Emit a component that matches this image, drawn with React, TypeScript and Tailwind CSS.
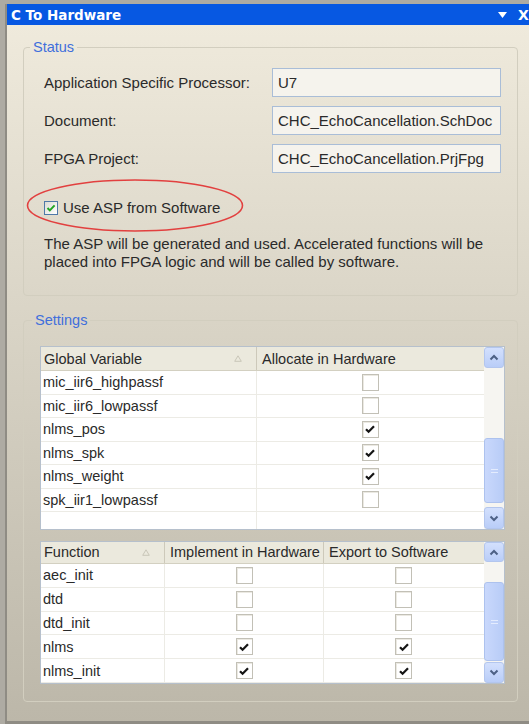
import React from "react";

type VarRow = { name: string; hw: boolean };
type FnRow = { name: string; hw: boolean; sw: boolean };

const variables: VarRow[] = [
  { name: "mic_iir6_highpassf", hw: false },
  { name: "mic_iir6_lowpassf", hw: false },
  { name: "nlms_pos", hw: true },
  { name: "nlms_spk", hw: true },
  { name: "nlms_weight", hw: true },
  { name: "spk_iir1_lowpassf", hw: false },
];

const functions: FnRow[] = [
  { name: "aec_init", hw: false, sw: false },
  { name: "dtd", hw: false, sw: false },
  { name: "dtd_init", hw: false, sw: false },
  { name: "nlms", hw: true, sw: true },
  { name: "nlms_init", hw: true, sw: true },
];

function GridCheck({ checked }: { checked: boolean }) {
  return (
    <span className="flex h-[17px] w-[17px] items-center justify-center border border-[#c2c0b6] bg-white shadow-[inset_1px_1px_0_#ebe9e2]">
      {checked && (
        <svg width="12" height="12" viewBox="0 0 12 12">
          <path d="M2 6.2l2.6 2.6L10 3.2" fill="none" stroke="#151515" strokeWidth="2.2" />
        </svg>
      )}
    </span>
  );
}

function SortArrow() {
  return (
    <svg width="8" height="7" viewBox="0 0 8 7" className="shrink-0">
      <path d="M4 0.8L7.3 6.3H0.7Z" fill="none" stroke="#c9c6b8" strokeWidth="1" />
    </svg>
  );
}

function Chevron({ up }: { up: boolean }) {
  return (
    <svg width="10" height="7" viewBox="0 0 10 7">
      <path
        d={up ? "M1.5 5.5L5 2l3.5 3.5" : "M1.5 1.5L5 5l3.5-3.5"}
        fill="none"
        stroke="#4d6185"
        strokeWidth="2"
      />
    </svg>
  );
}

const btn =
  "flex items-center justify-center rounded-[3px] border border-[#b3c6ee] bg-linear-to-b from-[#d3e0fd] to-[#b9cdf8]";

function ScrollBar({
  upClass,
  downClass,
  gapClass,
  thumbClass,
}: {
  upClass: string;
  downClass: string;
  gapClass: string;
  thumbClass: string;
}) {
  return (
    <div className="flex w-[20px] flex-col bg-[#f6f5f1]">
      <div className={`${btn} ${upClass}`}>
        <Chevron up />
      </div>
      <div className="flex flex-1 flex-col">
        <div className={gapClass} />
        <div
          className={`flex flex-col items-center justify-center gap-[2px] rounded-[3px] border border-[#adc2ee] bg-linear-to-r from-[#c9d8fc] to-[#b8ccf7] ${thumbClass}`}
        >
          <span className="h-px w-[7px] bg-[#e4ecfe]" />
          <span className="h-px w-[7px] bg-[#e4ecfe]" />
        </div>
      </div>
      <div className={`${btn} ${downClass}`}>
        <Chevron up={false} />
      </div>
    </div>
  );
}

const headCell =
  "flex items-center border-r border-[#cdc9ba] px-[3px] whitespace-nowrap overflow-hidden";

function VariableGrid() {
  return (
    <div className="flex h-[184px] border border-[#b6c0cc] bg-white">
      <div className="flex flex-1 flex-col">
        <div className="grid h-[24px] grid-cols-[216px_226px] border-b border-[#d3d0c1] bg-[#ebe9dd]">
          <div className={`${headCell} justify-between pr-[14px]`}>
            <span>Global Variable</span>
            <SortArrow />
          </div>
          <div className="flex items-center px-[5px]">Allocate in Hardware</div>
        </div>
        {variables.map((v) => (
          <div
            key={v.name}
            className="grid h-[23.5px] grid-cols-[216px_226px] border-b border-[#ecebe5]"
          >
            <div className="flex items-center border-r border-[#ecebe5] pl-[2px]">{v.name}</div>
            <div className="flex items-center justify-center">
              <GridCheck checked={v.hw} />
            </div>
          </div>
        ))}
        <div className="grid flex-1 grid-cols-[216px_226px]">
          <div className="border-r border-[#ecebe5]" />
        </div>
      </div>
      <ScrollBar
        upClass="h-[21px]"
        downClass="h-[22px]"
        gapClass="h-[70px]"
        thumbClass="h-[65px]"
      />
    </div>
  );
}

function FunctionGrid() {
  return (
    <div className="flex h-[143px] border border-[#b6c0cc] bg-white">
      <div className="flex flex-1 flex-col">
        <div className="grid h-[22px] grid-cols-[124px_159px_159px] border-b border-[#d3d0c1] bg-[#ebe9dd]">
          <div className={`${headCell} justify-between pr-[14px]`}>
            <span>Function</span>
            <SortArrow />
          </div>
          <div className={`${headCell} px-[5px]`}>Implement in Hardware</div>
          <div className="flex items-center px-[5px] whitespace-nowrap">Export to Software</div>
        </div>
        {functions.map((f) => (
          <div
            key={f.name}
            className="grid h-[24px] grid-cols-[124px_159px_159px] border-b border-[#ecebe5]"
          >
            <div className="flex items-center border-r border-[#ecebe5] pl-[2px]">{f.name}</div>
            <div className="flex items-center justify-center border-r border-[#ecebe5]">
              <GridCheck checked={f.hw} />
            </div>
            <div className="flex items-center justify-center">
              <GridCheck checked={f.sw} />
            </div>
          </div>
        ))}
      </div>
      <ScrollBar
        upClass="h-[20px]"
        downClass="h-[21px]"
        gapClass="h-[20px]"
        thumbClass="h-[79px]"
      />
    </div>
  );
}

function Field({ label, value }: { label: string; value: string }) {
  return (
    <div className="flex h-[29px] items-center">
      <span className="w-[228px] shrink-0">{label}</span>
      <div className="flex h-full flex-1 items-center border border-[#a9bdd7] bg-[#f5f3ed] pl-[5px]">
        {value}
      </div>
    </div>
  );
}

export default function App() {
  return (
    <div className="flex h-[724px] w-[529px] flex-col bg-[#aeaba3] pt-[4px] pl-[5px] font-['Liberation_Sans',Arial,sans-serif] text-[14.5px] leading-[18px] text-[#2a2a2a]">
      <div className="flex flex-1 flex-col border-l-2 border-b-[3px] border-[#8f8c84]">
        {/* panel caption */}
        <div className="flex h-[21px] items-center justify-between bg-[#0758e2] pl-[4px] text-white">
          <span className="font-['DejaVu_Sans',sans-serif] text-[13.5px] font-bold">C To Hardware</span>
          <div className="flex items-center gap-[11px]">
            <svg width="9" height="6" viewBox="0 0 9 6">
              <path d="M0 0h9L4.5 6Z" fill="#fff" />
            </svg>
            <span className="w-[11px] overflow-hidden font-['DejaVu_Sans',sans-serif] text-[14px] font-bold leading-none">
              X
            </span>
          </div>
        </div>

        <div className="flex flex-1 flex-col bg-linear-to-b from-[#efeadc] to-[#bcb7a9] pt-[14px] pr-[11px] pl-[16px]">
          <fieldset className="rounded-[4px] border border-[#d2cebf] pt-[12px] pr-[16px] pb-[24px] pl-[20px] text-[15px]">
            <legend className="ml-[-14px] px-[3px] text-[14.5px] leading-[17px] text-[#3f6fdc]">Status</legend>
            <div className="flex flex-col gap-[9px]">
              <Field label="Application Specific Processor:" value="U7" />
              <Field label="Document:" value="CHC_EchoCancellation.SchDoc" />
              <Field label="FPGA Project:" value="CHC_EchoCancellation.PrjFpg" />
            </div>

            <div className="relative mt-[26px] flex h-[18px] items-center gap-[5px]">
              <span className="flex h-[14px] w-[14px] items-center justify-center border border-[#4f79a8] bg-linear-to-br from-[#dcdcd4] to-white">
                <svg width="10" height="10" viewBox="0 0 10 10">
                  <path d="M1.5 5l2.3 2.4L8.6 2.4" fill="none" stroke="#22a524" strokeWidth="2" />
                </svg>
              </span>
              <span>Use ASP from Software</span>
              {/* red callout ring */}
              <svg
                width="220"
                height="56"
                viewBox="0 0 220 56"
                className="pointer-events-none absolute top-[-21px] left-[-19px]"
              >
                <ellipse cx="110" cy="27.5" rx="107.5" ry="25.5" fill="none" stroke="#e2403f" strokeWidth="1.6" />
              </svg>
            </div>

            <p className="mt-[18px]">
              The ASP will be generated and used. Accelerated functions will be
              <br />
              placed into FPGA logic and will be called by software.
            </p>
          </fieldset>

          <fieldset className="mt-[16px] rounded-[4px] border border-[#d2cebf] pt-[17px] pr-[12px] pb-[17px] pl-[16px]">
            <legend className="ml-[-8px] px-[3px] leading-[17px] text-[#3f6fdc]">Settings</legend>
            <div className="flex flex-col gap-[11px]">
              <VariableGrid />
              <FunctionGrid />
            </div>
          </fieldset>
        </div>
      </div>
    </div>
  );
}
